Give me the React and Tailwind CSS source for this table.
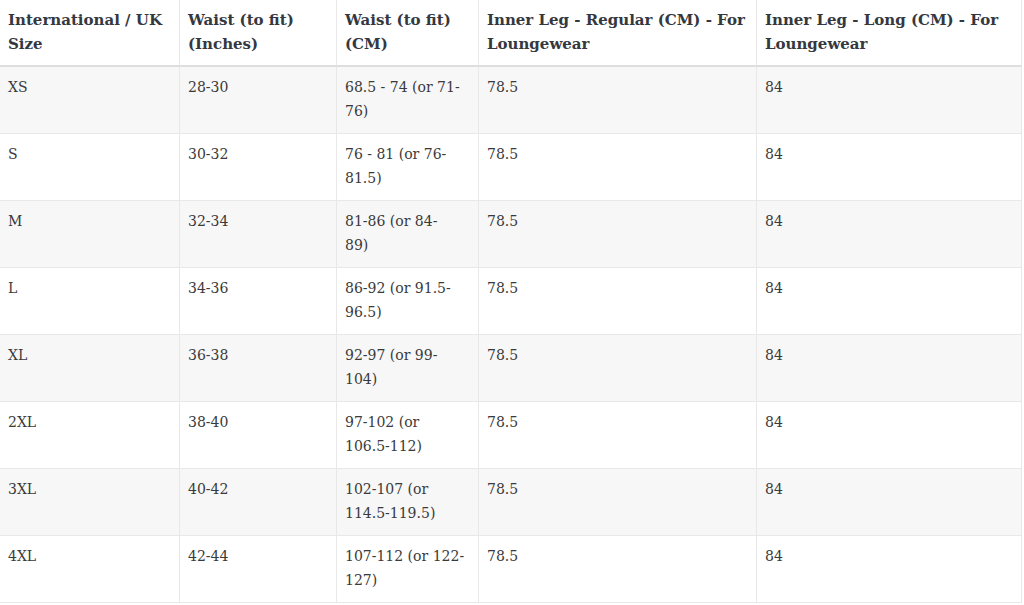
const headers = [
    ["International / UK", "Size"],
    ["Waist (to fit)", "(Inches)"],
    ["Waist (to fit)", "(CM)"],
    ["Inner Leg - Regular (CM) - For", "Loungewear"],
    ["Inner Leg - Long (CM) - For", "Loungewear"],
];

const rows = [
    ["XS", "28-30", ["68.5 - 74 (or 71-", "76)"], "78.5", "84"],
    ["S", "30-32", ["76 - 81 (or 76-", "81.5)"], "78.5", "84"],
    ["M", "32-34", ["81-86 (or 84-", "89)"], "78.5", "84"],
    ["L", "34-36", ["86-92 (or 91.5-", "96.5)"], "78.5", "84"],
    ["XL", "36-38", ["92-97 (or 99-", "104)"], "78.5", "84"],
    ["2XL", "38-40", ["97-102 (or", "106.5-112)"], "78.5", "84"],
    ["3XL", "40-42", ["102-107 (or", "114.5-119.5)"], "78.5", "84"],
    ["4XL", "42-44", ["107-112 (or 122-", "127)"], "78.5", "84"],
];

function Lines({ value }) {
    if (Array.isArray(value)) {
        return (
            <>
                {value[0]}
                <br />
                {value[1]}
            </>
        );
    }
    return value;
}

export default function App() {
    return (
        <div
            className="w-[1024px] h-[605px] bg-white overflow-hidden"
            style={{ fontFamily: '"DejaVu Serif", "Liberation Serif", serif' }}
        >
            <div className="grid grid-cols-[180px_157px_142px_278px_265px] text-[14px] leading-[24px]">
                {headers.map((h, i) => (
                    <div
                        key={i}
                        className="px-2 pt-2 pb-[9px] border-r border-b-2 border-r-[#e8e8e8] border-b-[#dedede] font-bold text-[15px] text-[#34383f] whitespace-nowrap"
                    >
                        {h[0]}
                        <br />
                        {h[1]}
                    </div>
                ))}

                {rows.map((row, r) =>
                    row.map((cell, c) => (
                        <div
                            key={r + "-" + c}
                            className={
                                "px-2 pt-2 pb-[10px] border-r border-b border-[#e8e8e8] text-[#3a3a3a] whitespace-nowrap " +
                                (r % 2 === 0 ? "bg-[#f7f7f7]" : "bg-white")
                            }
                        >
                            <Lines value={cell} />
                        </div>
                    ))
                )}
            </div>
        </div>
    );
}
